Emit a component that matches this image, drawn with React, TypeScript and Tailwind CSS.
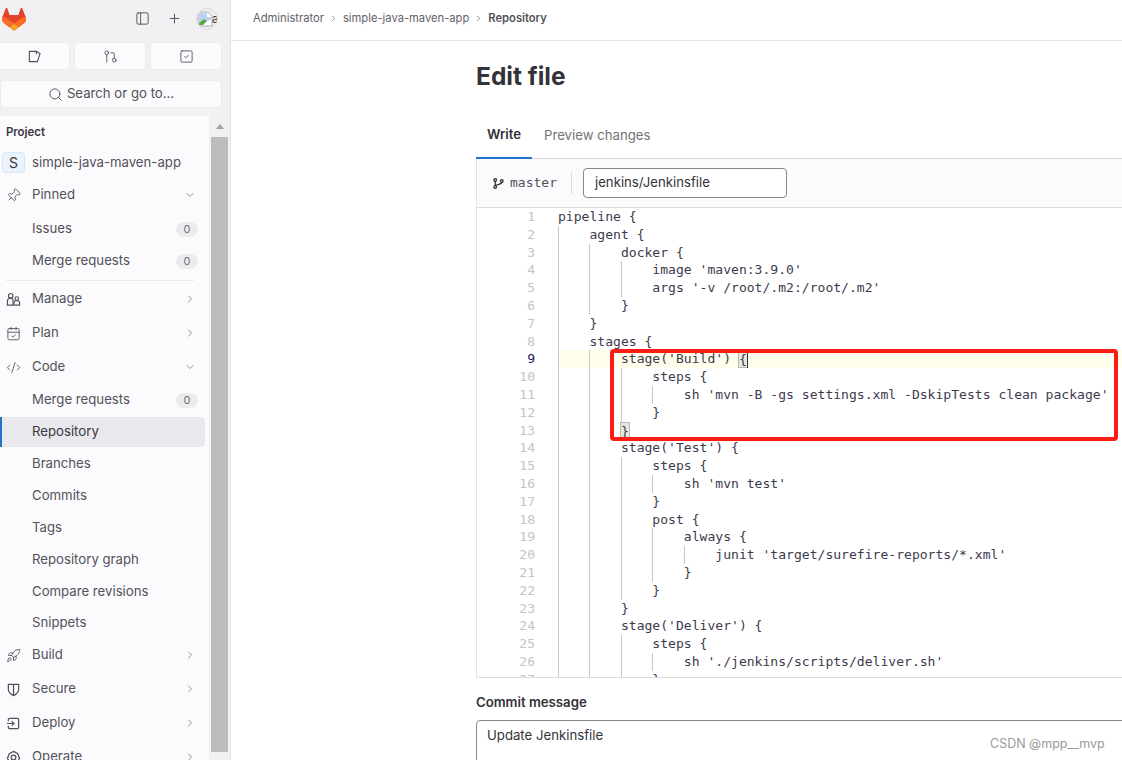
import React from 'react';
import { Search, Plus, ChevronDown, ChevronRight, PanelLeft, GitPullRequest, SquareCheck, Pin, CalendarCheck, CodeXml, Rocket } from 'lucide-react';

const sans = { fontFamily: 'Inter, "Noto Sans", sans-serif' };

const codeLines = [
  'pipeline {',
  '    agent {',
  '        docker {',
  "            image 'maven:3.9.0'",
  "            args '-v /root/.m2:/root/.m2'",
  '        }',
  '    }',
  '    stages {',
  "        stage('Build') {",
  '            steps {',
  "                sh 'mvn -B -gs settings.xml -DskipTests clean package'",
  '            }',
  '        }',
  "        stage('Test') {",
  '            steps {',
  "                sh 'mvn test'",
  '            }',
  '            post {',
  '                always {',
  "                    junit 'target/surefire-reports/*.xml'",
  '                }',
  '            }',
  '        }',
  "        stage('Deliver') {",
  '            steps {',
  "                sh './jenkins/scripts/deliver.sh'",
  '            }',
];

const GitlabLogo = () => (
  <svg width="24" height="24" viewBox="0 0 25 24" className="shrink-0">
    <path d="M24.5 9.5l-.03-.09L21.1.9a.9.9 0 0 0-1.7.1l-2.27 6.95H7.9L5.63 1a.9.9 0 0 0-1.7-.1L.56 9.4l-.03.1a6.2 6.2 0 0 0 2.06 7.2l5.2 3.9 2.6 1.96 1.57 1.19a1.06 1.06 0 0 0 1.28 0l1.57-1.19 2.6-1.96 5.23-3.92a6.2 6.2 0 0 0 2.06-7.18z" fill="#E24329" />
    <path d="M24.5 9.5l-.03-.09a11.5 11.5 0 0 0-4.58 2.06L12.5 17.05l4.7 3.55 5.23-3.92a6.2 6.2 0 0 0 2.07-7.18z" fill="#FC6D26" />
    <path d="M7.8 20.6l2.6 1.96 1.57 1.19a1.06 1.06 0 0 0 1.28 0l1.57-1.19 2.6-1.96-4.92-3.55z" fill="#FCA326" />
    <path d="M5.1 11.47A11.4 11.4 0 0 0 .53 9.41l-.03.09a6.2 6.2 0 0 0 2.06 7.2l5.23 3.9 4.71-3.55z" fill="#FC6D26" />
  </svg>
);

const BrokenAvatar = () => (
  <div className="w-[22px] h-[22px] rounded-full border border-[#dcdcde] overflow-hidden flex items-center shrink-0 bg-[#f0f0f2]">
    <svg width="16" height="16" viewBox="0 0 16 16" className="shrink-0">
      <path d="M1 1h10l4 4v10H1z" fill="#fff" stroke="#a8a8a8" />
      <path d="M2 2h8v4h4v3L2 12z" fill="#bcd3f3" />
      <path d="M2 14v-2l5-4 3 2-4 4z" fill="#5aa845" />
    </svg>
    <span className="text-[12px] leading-none text-[#333238] -ml-px">a</span>
  </div>
);

const IssueIcon = () => (
  <svg width="15" height="15" viewBox="0 0 16 16" fill="none" stroke="#535158" strokeWidth="1.2">
    <path d="M2.5 2.500h7.500l4 2.500-3 8.500H2.500z" strokeLinejoin="round" />
    <path d="M10 2.500v3" />
  </svg>
);

const ManageIcon = () => (
  <svg width="15" height="15" viewBox="0 0 16 16" fill="none" stroke="#535158" strokeWidth="1.2">
    <circle cx="5" cy="4" r="2.400" />
    <circle cx="11.500" cy="7" r="1.900" />
    <path d="M1.500 14V9.500a3 3 0 0 1 6 0V14z" />
    <path d="M8.500 14v-2.500a3 2.500 0 0 1 6 0V14z" />
  </svg>
);

const ShieldIcon = () => (
  <svg width="15" height="15" viewBox="0 0 16 16" fill="none" stroke="#535158" strokeWidth="1.300">
    <path d="M2.500 2.500h11V8c0 3-2.500 5-5.500 6.500C5 13 2.500 11 2.500 8z" strokeLinejoin="round" />
    <path d="M8 2.500v12" />
  </svg>
);

const DeployIcon = () => (
  <svg width="15" height="15" viewBox="0 0 16 16" fill="none" stroke="#535158" strokeWidth="1.300">
    <path d="M2.500 5.500V4a1.500 1.500 0 0 1 1.500-1.500h8A1.500 1.500 0 0 1 13.500 4v8a1.500 1.500 0 0 1-1.500 1.500H4A1.500 1.500 0 0 1 2.500 12v-1.500" />
    <path d="M6 5.500L8.500 8 6 10.500M1 8h7" />
  </svg>
);

const OperateIcon = () => (
  <svg width="15" height="15" viewBox="0 0 16 16" fill="none" stroke="#535158" strokeWidth="1.300">
    <path d="M8 1.500l4.500 2.500 2 5-2 3H3.500l-2-3 2-5z" />
    <circle cx="8" cy="8" r="2.500" />
  </svg>
);

const ic = { size: 15, color: '#535158', strokeWidth: 1.4 };

const NavMain = ({ icon, label, open, h = 'h-[34px]' }: { icon: React.ReactNode; label: string; open?: boolean; h?: string }) => (
  <div className={`${h} flex items-center pl-[6px] pr-[13px] shrink-0`}>
    <span className="w-[26px] flex items-center shrink-0">{icon}</span>
    <span className="flex-1 text-[13.2px] text-[#535158]">{label}</span>
    {open ? <ChevronDown size={12} color="#737278" strokeWidth={1.5} /> : <ChevronRight size={12} color="#737278" strokeWidth={1.5} />}
  </div>
);

const NavSub = ({ label, count, active, h = 'h-[32px]' }: { label: string; count?: number; active?: boolean; h?: string }) => (
  <div className={`${h} flex items-center shrink-0 pr-[4px]`}>
    <div className={`relative w-full h-[30px] flex items-center pl-[32px] pr-[7px] rounded-r-[4px] ${active ? 'bg-[#e9e8ec]' : ''}`}>
      {active && <span className="absolute left-0 top-0 bottom-0 w-[2px] bg-[#1f75cb]" />}
      <span className={`flex-1 text-[13.2px] ${active ? 'text-[#3a383f]' : 'text-[#535158]'}`}>{label}</span>
      {count !== undefined && (
        <span className="w-[22px] h-[15px] rounded-full bg-[#ececef] text-[11px] leading-[15px] text-center text-[#737278]">{count}</span>
      )}
    </div>
  </div>
);

const Sidebar = () => (
  <aside className="w-[231px] h-[760px] shrink-0 bg-[#f1f1f3] border-r border-[#e4e4e7] flex flex-col overflow-hidden" style={sans}>
    <div className="h-[35px] flex items-center pl-[2px] pr-[12px] mt-[1px] shrink-0">
      <GitlabLogo />
      <div className="flex-1" />
      <PanelLeft size={15} color="#535158" strokeWidth={1.5} />
      <Plus size={15} color="#535158" strokeWidth={1.5} className="ml-[17px]" />
      <div className="ml-[14px]"><BrokenAvatar /></div>
    </div>
    <div className="mt-[6px] flex gap-[4px] pr-[8px] shrink-0">
      <div className="flex-1 -ml-[2px] h-[28px] bg-[#fbfafd] rounded-[4px] border border-[#ececef] flex items-center justify-center"><IssueIcon /></div>
      <div className="flex-1 h-[28px] bg-[#fbfafd] rounded-[4px] border border-[#ececef] flex items-center justify-center"><GitPullRequest size={15} color="#535158" strokeWidth={1.4} /></div>
      <div className="flex-1 h-[28px] bg-[#fbfafd] rounded-[4px] border border-[#ececef] flex items-center justify-center"><SquareCheck size={15} color="#535158" strokeWidth={1.4} /></div>
    </div>
    <div className="mt-[10px] h-[28px] mr-[8px] bg-[#fbfafd] rounded-[4px] border border-[#ececef] flex items-center justify-center gap-[4px] shrink-0">
      <Search size={15} color="#535158" strokeWidth={1.5} />
      <span className="text-[13.2px] text-[#535158]">Search or go to...</span>
    </div>
    <div className="mt-[8px] flex-1 flex min-h-0">
      <nav className="w-[209px] bg-[#fbfafd] flex flex-col overflow-hidden">
        <div className="h-[31px] pt-[9px] pl-[6px] text-[11.4px] leading-[14px] font-semibold text-[#3a383f] shrink-0">Project</div>
        <div className="h-[31px] flex items-center pl-[2px] shrink-0">
          <span className="w-[23px] h-[21px] rounded-[4px] bg-[#e9f3fc] border border-[#d6e6f6] text-[14px] flex items-center justify-center text-[#3a383f] shrink-0">S</span>
          <span className="ml-[7px] text-[13.2px] text-[#535158]">simple-java-maven-app</span>
        </div>
        <NavMain icon={<Pin {...ic} className="rotate-45" />} label="Pinned" open />
        <div className="h-px shrink-0" />
        <NavSub label="Issues" count={0} />
        <NavSub label="Merge requests" count={0} />
        <div className="h-[5px] shrink-0 mx-[6px] mr-[15px] border-b border-[#e9e8ec] -mt-[1px] mb-[1px]" />
        <NavMain icon={<ManageIcon />} label="Manage" />
        <NavMain icon={<CalendarCheck {...ic} />} label="Plan" />
        <NavMain icon={<CodeXml {...ic} />} label="Code" open />
        <NavSub label="Merge requests" count={0} />
        <NavSub label="Repository" active />
        <NavSub label="Branches" />
        <NavSub label="Commits" />
        <NavSub label="Tags" />
        <NavSub label="Repository graph" />
        <NavSub label="Compare revisions" />
        <NavSub label="Snippets" h="h-[30px]" />
        <NavMain icon={<Rocket {...ic} />} label="Build" />
        <NavMain icon={<ShieldIcon />} label="Secure" />
        <NavMain icon={<DeployIcon />} label="Deploy" />
        <NavMain icon={<OperateIcon />} label="Operate" />
      </nav>
      <div className="w-[21px] flex flex-col bg-[#f1f1f3] shrink-0 px-[2px]">
        <div className="h-[21px] flex items-center justify-center shrink-0">
          <span className="w-0 h-0 border-x-[4px] border-x-transparent border-b-[5px] border-b-[#a3a3a3]" />
        </div>
        <div className="h-[615px] bg-[#bdbdbd] shrink-0" />
      </div>
    </div>
  </aside>
);

const Main = () => (
  <main className="flex-1 h-[760px] overflow-hidden bg-white" style={sans}>
    <div className="h-[41px] border-b border-[#e4e4e7] flex items-center pb-[4px] pl-[22px] gap-[5px] text-[11.2px] text-[#626168]">
      <span>Administrator</span>
      <ChevronRight size={9} color="#737278" />
      <span>simple-java-maven-app</span>
      <ChevronRight size={9} color="#737278" />
      <span className="font-semibold text-[#535158]">Repository</span>
    </div>
    <div className="pl-[245px]">
      <h1 className="mt-[19px] h-[32px] text-[24.500px] leading-[32px] font-bold text-[#333238]">Edit file</h1>
      <div className="mt-[20px] h-[47px] border-b border-[#dcdcde] flex items-stretch text-[13.200px]">
        <div className="w-[56px] -mb-px pt-[1px] border-b-2 border-[#1f75cb] flex items-center justify-center font-semibold text-[#333238]">Write</div>
        <div className="ml-[12px] pt-[1px] flex items-center text-[#737278]">Preview changes</div>
      </div>
      <div className="w-[700px] h-[520px] border-l border-[#e4e4e7]">
        <div className="h-[49px] bg-[#fbfafd] border-b border-[#dcdcde] flex items-center pl-[16px]">
          <svg width="11" height="11" viewBox="0 0 11 11" fill="none" stroke="#333238" strokeWidth="1.300">
            <circle cx="2.200" cy="2" r="1.300" />
            <circle cx="2.200" cy="9" r="1.300" />
            <circle cx="8.800" cy="3" r="1.300" />
            <path d="M2.200 3.300v4.400M8.800 4.300c0 2.500-4 1.500-6.600 3.400" />
          </svg>
          <span className="ml-[6px] text-[13px] text-[#535158]" style={{ fontFamily: '"DejaVu Sans Mono", monospace' }}>master</span>
          <div className="ml-[14px] w-px h-[22px] bg-[#dcdcde]" />
          <div className="ml-[11px] w-[204px] h-[30px] bg-white border border-[#89888d] rounded-[4px] flex items-center pl-[11px] text-[13.200px] text-[#333238]">jenkins/Jenkinsfile</div>
        </div>
        <div className="h-[470px] overflow-hidden border-b border-[#dcdcde] rounded-bl-[4px] bg-white">
          <div className="text-[13.070px] leading-[17.800px]" style={{ fontFamily: '"DejaVu Sans Mono", monospace' }}>
            {codeLines.map((line, i) => {
              const indent = line.length - line.trimStart().length;
              const guides = Math.floor(indent / 4);
              const current = i === 8;
              return (
                <div key={i} className="flex h-[17.800px] whitespace-pre">
                  <span className={`w-[58px] text-right shrink-0 ${current ? 'text-[#1a1a5e]' : 'text-[#c4c4c8]'}`}>{i + 1}</span>
                  <div className={`relative flex-1 ml-[23px] text-[#3d3a4e] ${current ? 'bg-[#fffdeb]' : ''}`}>
                    {Array.from({ length: guides }).map((_, g) => (
                      <span key={g} className="absolute top-0 bottom-0 w-px bg-[#c8c8c8]" style={{ left: g * 31.45 }} />
                    ))}
                    {current ? (
                      <>
                        {"        stage('Build') "}
                        <span className="inline-block h-[17.800px] align-top bg-[#e4eadb] border border-[#b9b9b9] -mx-px">{'{'}</span>
                        <span className="inline-block w-px h-[17.800px] align-top bg-[#333238]" />
                      </>
                    ) : i === 12 ? (
                      <>
                        {'        '}
                        <span className="inline-block h-[17.800px] align-top bg-[#e4eadb] border border-[#b9b9b9] -mx-px">{'}'}</span>
                      </>
                    ) : line}
                  </div>
                </div>
              );
            })}
          </div>
        </div>
      </div>
      <div className="mt-[15px] text-[13.200px] leading-[16px] font-semibold text-[#333238]">Commit message</div>
      <div className="mt-[10px] w-[700px] h-[60px] border border-[#89888d] rounded-[4px] pl-[10px] pt-[5px] text-[13.200px] text-[#333238]">Update Jenkinsfile</div>
    </div>
  </main>
);

export default function App() {
  return (
    <div className="relative w-[1122px] h-[760px] overflow-hidden flex bg-white">
      <Sidebar />
      <Main />
      <div className="absolute left-[610px] top-[349px] w-[508px] h-[92px] border-[4px] border-[#fb1d14] rounded-[4px]" />
      <div className="absolute left-[990px] top-[736px] text-[12.500px] leading-[16px] text-[#9a9a9a]" style={sans}>CSDN @mpp__mvp</div>
    </div>
  );
}
